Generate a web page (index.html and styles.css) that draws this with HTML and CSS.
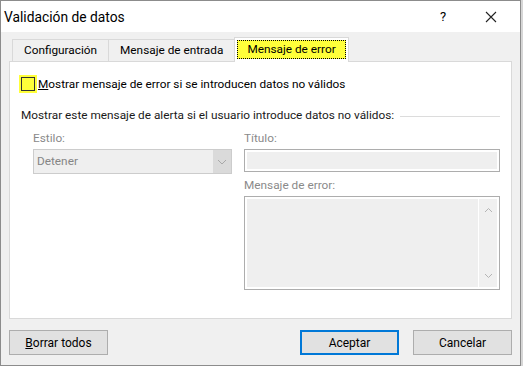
FILE: index.html
```html
<!DOCTYPE html>
<html lang="es">
<head>
  <meta charset="UTF-8" />
  <title>Validación de datos</title>
  <link rel="stylesheet" href="styles.css">
</head>
<body>
  <div class="dialog">
    <div class="titlebar">
      <span class="title">Validación de datos</span>
      <span class="help">?</span>
      <span class="close">
        <svg width="12" height="12" viewBox="0 0 12 12"><path d="M1 1 L11 11 M11 1 L1 11" stroke="#222" stroke-width="1.1" fill="none"/></svg>
      </span>
    </div>

    <div class="body">
      <div class="tabs">
        <div class="tab">Configuración</div>
        <div class="tab">Mensaje de entrada</div>
        <div class="tab active"><span class="focus">Mensaje de error</span></div>
      </div>

      <div class="panel">
        <label class="check">
          <span class="box"></span>
          <span><u>M</u>ostrar mensaje de error si se introducen datos no válidos</span>
        </label>

        <div class="group">
          <span>Mostrar este mensaje de alerta si el usuario introduce datos no válidos:</span>
          <span class="rule"></span>
        </div>

        <div class="fields">
          <div class="col-left">
            <div class="label">Estilo:</div>
            <div class="select">
              <span class="value">Detener</span>
              <span class="arrow">
                <svg width="10" height="6" viewBox="0 0 10 6"><path d="M1 1 L5 5 L9 1" stroke="#a8a8a8" stroke-width="1" fill="none"/></svg>
              </span>
            </div>
          </div>
          <div class="col-right">
            <div class="label">Título:</div>
            <div class="input"></div>
            <div class="label">Mensaje de error:</div>
            <div class="textarea">
              <div class="scroll">
                <svg width="9" height="6" viewBox="0 0 9 6"><path d="M1 5 L4.5 1.5 L8 5" stroke="#b4b4b4" stroke-width="1" fill="none"/></svg>
                <svg width="9" height="6" viewBox="0 0 9 6"><path d="M1 1 L4.5 4.5 L8 1" stroke="#b4b4b4" stroke-width="1" fill="none"/></svg>
              </div>
            </div>
          </div>
        </div>
      </div>

      <div class="buttons">
        <button class="btn"><u>B</u>orrar todos</button>
        <span class="spacer"></span>
        <button class="btn default">Aceptar</button>
        <button class="btn">Cancelar</button>
      </div>
    </div>
  </div>
</body>
</html>
```

FILE: styles.css
```css
body {
  margin: 0;
  background-color: #d6d6d6;
  font-family: Roboto, "Noto Sans", sans-serif;
  font-size: 11.8px;
  color: #000;
}

.dialog {
  width: 519px;
  height: 364px;
  border: 1px solid #8c8c8c;
  background-color: #f0f0f0;
  display: flex;
  flex-direction: column;
}

.titlebar {
  height: 31px;
  background-color: #fff;
  display: flex;
  align-items: center;
  padding-left: 3px;
}

.title {
  font-size: 13.8px;
  flex: 1;
}

.help {
  font-size: 13px;
  width: 50px;
  text-align: center;
}

.close {
  width: 46px;
  display: flex;
  justify-content: center;
  padding-right: 6px;
}

.body {
  flex: 1;
  padding: 6px 8px 0 8px;
}

.tabs {
  display: flex;
  align-items: flex-end;
  padding-left: 3px;
  height: 23px;
}

.tab {
  height: 21px;
  line-height: 21px;
  padding: 0 11px;
  border: 1px solid #d9d9d9;
  border-bottom: none;
  border-right: none;
  background-color: #f0f0f0;
}

.tab.active {
  height: 24px;
  line-height: 22px;
  background-color: #fff;
  border-right: 1px solid #d9d9d9;
  padding: 0 2px 0 2px;
  position: relative;
  z-index: 1;
  margin-bottom: -1px;
}

.focus {
  display: inline-block;
  line-height: 17px;
  padding: 0 9px;
  border: 1px dotted #000;
  background-color: #ffff3a;
  margin-top: 2px;
}

.panel {
  height: 241px;
  background-color: #fff;
  border: 1px solid #d9d9d9;
  padding: 15px 11px 0 11px;
}

.check {
  display: flex;
  align-items: center;
  gap: 3px;
}

.box {
  width: 12px;
  height: 12px;
  border: 1px solid #333;
  background-color: #ffff3a;
  box-shadow: 0 0 0 2px #ffff3a;
}

.group {
  display: flex;
  align-items: center;
  gap: 6px;
  margin-top: 17px;
  color: #1a1a1a;
}

.rule {
  flex: 1;
  border-top: 1px solid #dcdcdc;
  margin-top: 2px;
}

.fields {
  display: flex;
  gap: 12px;
  padding-left: 12px;
  margin-top: 7px;
}

.label {
  color: #8a8a8a;
  height: 19px;
  line-height: 19px;
  margin-bottom: 1px;
}

.col-left {
  width: 199px;
}

.col-right {
  width: 256px;
  display: flex;
  flex-direction: column;
}

.select {
  height: 23px;
  border: 1px solid #cccccc;
  background-color: #efefef;
  display: flex;
  margin-top: 1px;
}

.value {
  flex: 1;
  color: #858585;
  line-height: 23px;
  padding-left: 3px;
}

.arrow {
  width: 18px;
  background-color: #dadada;
  display: flex;
  align-items: center;
  justify-content: center;
}

.input {
  height: 21px;
  border: 1px solid #adadad;
  background-color: #efefef;
  box-shadow: inset 0 0 0 2px #fff;
  margin-bottom: 4px;
}

.textarea {
  height: 88px;
  border: 1px solid #adadad;
  background-color: #efefef;
  box-shadow: inset 0 0 0 2px #fff;
  display: flex;
  justify-content: flex-end;
  padding: 2px;
}

.scroll {
  width: 18px;
  background-color: #f0f0f0;
  border-left: 1px solid #fff;
  display: flex;
  flex-direction: column;
  justify-content: space-between;
  align-items: center;
  padding: 8px 0 8px 0;
}

.buttons {
  display: flex;
  gap: 14px;
  margin-top: 11px;
}

.spacer {
  flex: 1;
}

.btn {
  width: 99px;
  height: 25px;
  border: 1px solid #adadad;
  background-color: #e1e1e1;
  font-family: inherit;
  font-size: 12px;
  color: #000;
  padding: 0;
}

.btn.default {
  border: 2px solid #0078d7;
}
```
